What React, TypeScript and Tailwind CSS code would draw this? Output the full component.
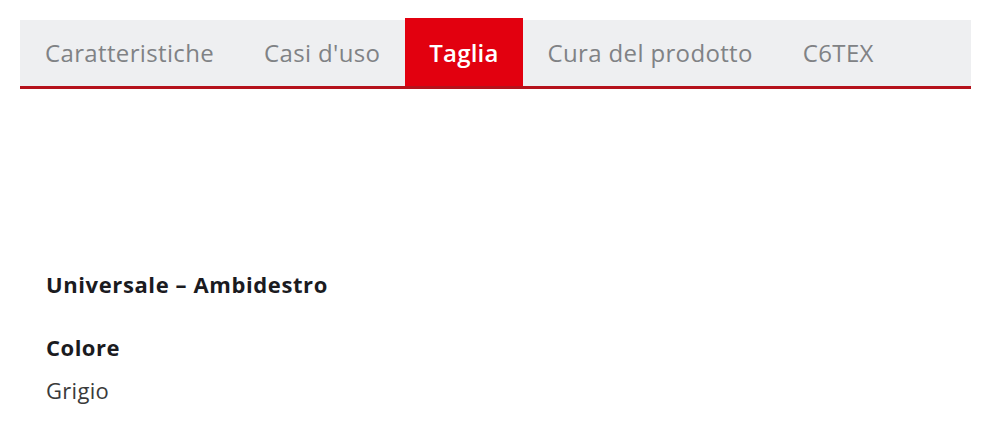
import { useState } from "react";

const tabs = ["Caratteristiche", "Casi d'uso", "Taglia", "Cura del prodotto", "C6TEX"];

export default function App() {
  const [active, setActive] = useState("Taglia");

  return (
    <div className="min-h-screen bg-white pt-[20px] pl-[20px] pr-[29px] font-['Open_Sans',sans-serif]">
      <div className="flex h-[69px] items-stretch border-b-[3px] border-[#b5121b] bg-[#eeeff1]">
        {tabs.map((t) => (
          <button
            key={t}
            onClick={() => setActive(t)}
            className={
              t === active
                ? "-mt-[2px] flex items-center bg-[#e2000f] px-[24px] pt-[2px] text-[24px] font-semibold tracking-[0.2px] text-white"
                : "flex items-center px-[25px] text-[24px] tracking-[0.35px] text-[#808285]"
            }
          >
            {t}
          </button>
        ))}
      </div>

      <div className="pl-[26px] pt-[180px]">
        <p className="text-[22px] font-bold leading-[30px] tracking-[0.6px] text-[#1b1b1f]">Universale – Ambidestro</p>
        <p className="mt-[33px] text-[22px] font-bold leading-[30px] tracking-[0.5px] text-[#1b1b1f]">Colore</p>
        <p className="mt-[13px] text-[22px] leading-[30px] tracking-[0.3px] text-[#3a3a3a]">Grigio</p>
      </div>
    </div>
  );
}
